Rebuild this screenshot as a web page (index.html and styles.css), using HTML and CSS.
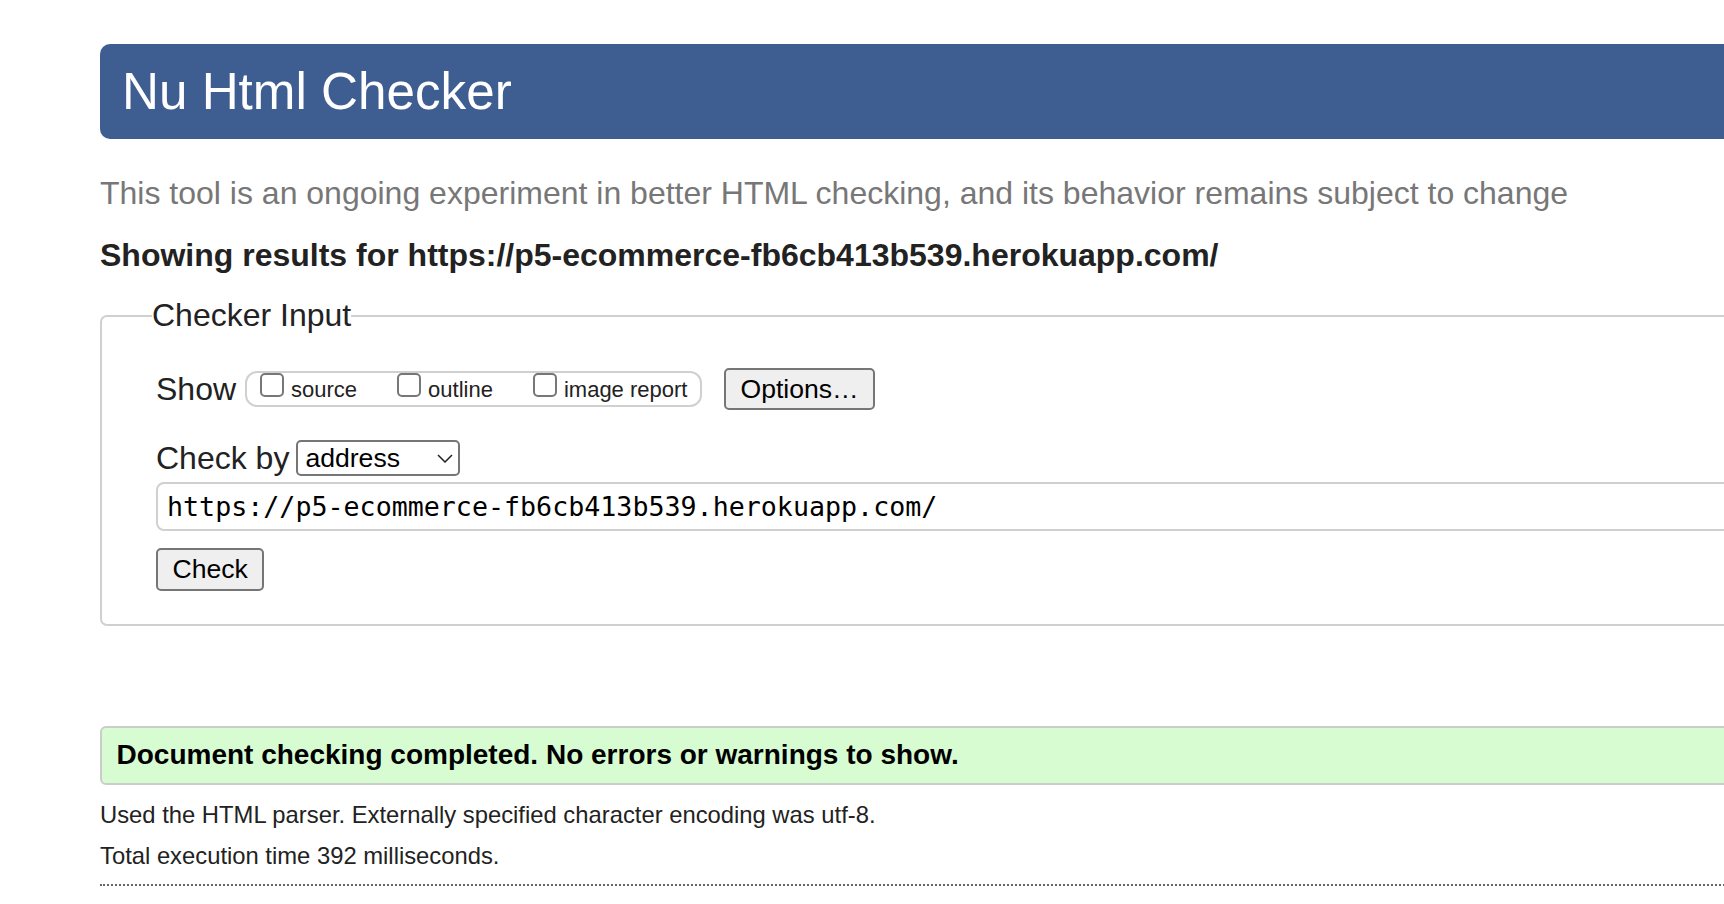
FILE: index.html
```html
<!DOCTYPE html>
<html lang="en">
<head>
<meta charset="utf-8">
<title>Showing results for https://p5-ecommerce-fb6cb413b539.herokuapp.com/ - Nu Html Checker</title>
<link rel="stylesheet" href="styles.css">
</head>
<body>
<div class="page">
  <h1 class="title">Nu Html Checker</h1>
  <p class="intro">This tool is an ongoing experiment in better HTML checking, and its behavior remains subject to change</p>
  <h2 class="results-for">Showing results for https://p5-ecommerce-fb6cb413b539.herokuapp.com/</h2>
  <form class="checker-form">
    <fieldset class="checker">
      <legend class="checker-legend">Checker Input</legend>
      <div class="show-row">
        <span class="show-label">Show</span>
        <div class="show-group">
          <label class="opt"><span class="cb"></span><span class="opt-text">source</span></label>
          <label class="opt"><span class="cb"></span><span class="opt-text">outline</span></label>
          <label class="opt"><span class="cb"></span><span class="opt-text">image report</span></label>
        </div>
        <span class="btn btn-options">Options…</span>
      </div>
      <div class="checkby-row">
        <span class="checkby-label">Check by</span>
        <span class="select">
          <span class="select-value">address</span>
          <svg class="chevron" width="16" height="9" viewBox="0 0 16 9" aria-hidden="true"><path d="M1 1 L8 8 L15 1" fill="none" stroke="#222" stroke-width="1.5"/></svg>
        </span>
      </div>
      <div class="url-input">https://p5-ecommerce-fb6cb413b539.herokuapp.com/</div>
      <div class="submit-row"><span class="btn btn-check">Check</span></div>
    </fieldset>
  </form>
  <div class="success">Document checking completed. No errors or warnings to show.</div>
  <p class="details">Used the HTML parser. Externally specified character encoding was utf-8.</p>
  <p class="details details-next">Total execution time 392 milliseconds.</p>
  <hr class="dotted-rule">
</div>
</body>
</html>
```
FILE: styles.css
```css
html, body {
  margin: 0;
  padding: 0;
  overflow: hidden;
  background: #fff;
}

body {
  font-family: "Liberation Sans", Arial, Helvetica, sans-serif;
  color: #222;
}

.page {
  margin-left: 100px;
  width: 1760px;
  padding-top: 44px;
}

.title {
  margin: 0;
  background: #3e5e91;
  color: #fff;
  font-size: 51.2px;
  font-weight: normal;
  line-height: 57px;
  padding: 19px 22px;
  border-radius: 10px;
}

.intro {
  margin: 36px 0 0;
  font-size: 32px;
  line-height: 37px;
  color: #777;
}

.results-for {
  margin: 25px 0 0;
  font-size: 32px;
  line-height: 37px;
  font-weight: bold;
  color: #222;
}

.checker-form {
  margin: 23px 0 0;
}

.checker {
  margin: 0;
  padding: 34px 0 33px 54px;
  border: 2px solid #d0d0d0;
  border-radius: 7px;
  min-width: 0;
}

.checker-legend {
  padding: 0;
  margin-left: -4px;
  font-size: 32px;
  line-height: 37px;
  color: #222;
}

.show-row {
  display: flex;
  align-items: center;
  height: 42px;
}

.show-label {
  font-size: 32px;
  line-height: 37px;
  margin-right: 9px;
}

.show-group {
  display: flex;
  align-items: flex-start;
  gap: 40px;
  box-sizing: border-box;
  height: 36px;
  padding: 0 13px 0 13px;
  border: 2px solid #d0d0d0;
  border-radius: 12px;
}

.opt {
  display: flex;
  align-items: baseline;
  gap: 7px;
  font-size: 22px;
  line-height: 26px;
  color: #222;
}

.cb {
  flex: none;
  width: 24px;
  height: 24px;
  box-sizing: border-box;
  border: 2px solid #777;
  border-radius: 5px;
  background: #fff;
}

.btn {
  display: inline-block;
  box-sizing: border-box;
  font-family: "Liberation Sans", Arial, Helvetica, sans-serif;
  font-size: 26.6px;
  color: #000;
  background: #efefef;
  border: 2px solid #767676;
  border-radius: 5px;
}

.btn-options {
  margin-left: 22px;
  height: 42px;
  line-height: 38px;
  padding: 0 14px;
}

.btn-check {
  height: 43px;
  line-height: 39px;
  padding: 0 14.5px;
}

.checkby-row {
  display: flex;
  align-items: center;
  gap: 7px;
  margin-top: 29.5px;
}

.checkby-label {
  font-size: 32px;
  line-height: 37px;
}

.select {
  display: flex;
  align-items: center;
  justify-content: space-between;
  box-sizing: border-box;
  width: 164px;
  height: 36px;
  padding: 0 5px 0 7px;
  border: 2px solid #767676;
  border-radius: 5px;
  font-size: 26.6px;
  color: #000;
  background: #fff;
}

.chevron {
  display: block;
}

.url-input {
  margin-top: 5px;
  box-sizing: border-box;
  height: 49px;
  padding-left: 9px;
  border: 2px solid #d0d0d0;
  border-radius: 8px;
  font-family: "DejaVu Sans Mono", "Liberation Mono", monospace;
  font-size: 26.67px;
  line-height: 45px;
  color: #000;
}

.submit-row {
  margin-top: 17px;
  display: flex;
}

.success {
  margin-top: 100px;
  padding: 11.5px 14.5px;
  border: 2px solid #ccc;
  border-radius: 6px;
  background: #d8fcd2;
  font-size: 28px;
  line-height: 32px;
  font-weight: bold;
  color: #000;
}

.details {
  margin: 16px 0 0;
  font-size: 23.8px;
  line-height: 27px;
  color: #222;
}

.details-next {
  margin-top: 14px;
}

.dotted-rule {
  margin: 15px 0 0;
  height: 0;
  border: 0;
  border-top: 2px dotted #666;
}
```
